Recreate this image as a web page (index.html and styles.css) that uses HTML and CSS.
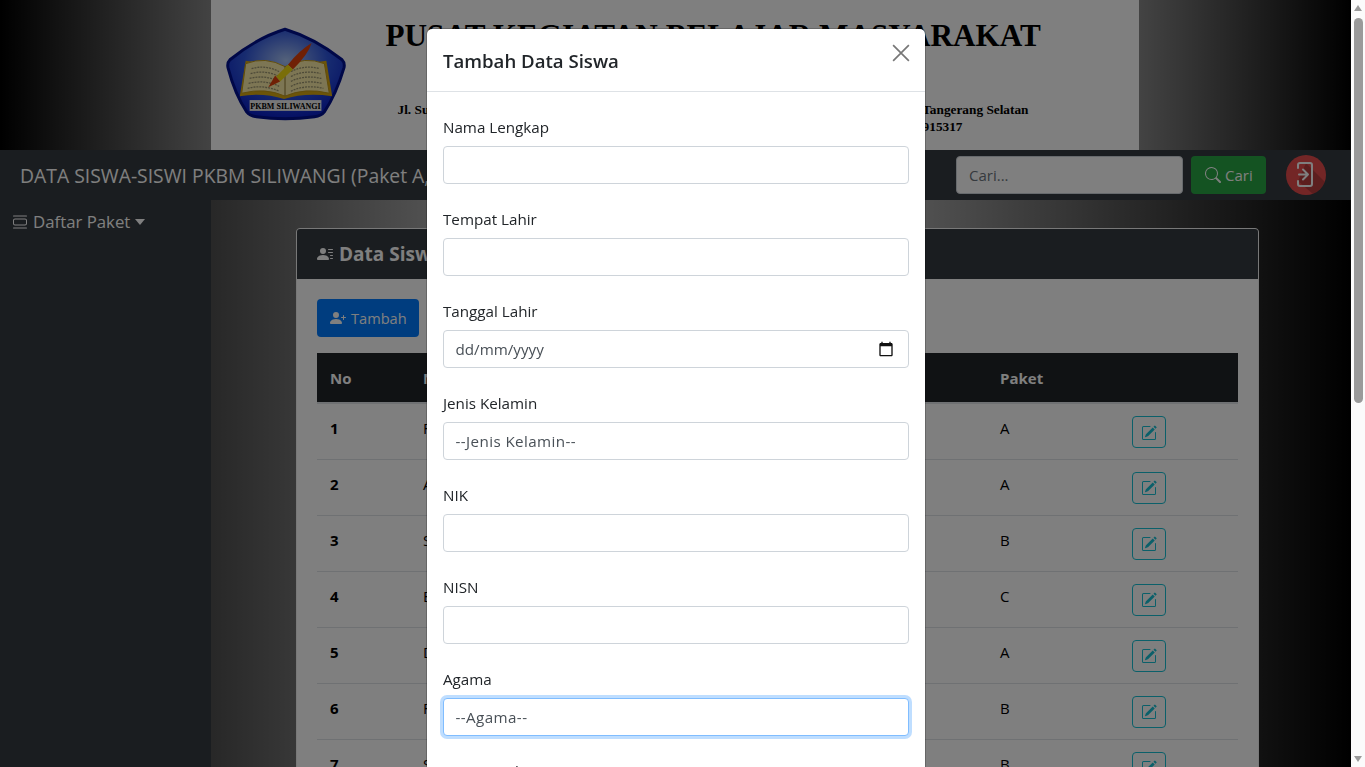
FILE: index.html
```html
<!DOCTYPE html>
<html lang="en">
<head>
    <meta charset="UTF-8">
    <meta name="viewport" content="width=device-width, initial-scale=1.0">
    <title>Data Siswa PKBM Siliwangi</title>
    <link rel="stylesheet" href="styles.css">
</head>
<body>
    <div class="page">
        <header class="top">
            <div class="banner">
                <svg class="logo" viewBox="0 0 122 96" width="120" height="95">
                    <defs>
                        <radialGradient id="shieldFill" cx="50%" cy="35%" r="65%">
                            <stop offset="0" stop-color="#a9c4f5"/>
                            <stop offset="0.55" stop-color="#2f57e0"/>
                            <stop offset="1" stop-color="#0a20c8"/>
                        </radialGradient>
                    </defs>
                    <path d="M60 2 Q90 11 118 33 Q121 36 120 41 Q112 68 100 86 Q97 90 90 91 Q60 95 31 91 Q24 90 21 86 Q9 68 2 41 Q1 36 4 33 Q31 11 60 2 Z" fill="url(#shieldFill)" stroke="#001090" stroke-width="3"/>
                    <path d="M14 70 L20 34 L59 40 L102 34 L108 70 Q80 66 59 73 Q38 66 14 70 Z" fill="#d9a810"/>
                    <path d="M20 37 Q40 29 60 40 Q80 29 100 37 L105 67 Q80 61 60 70 Q40 61 16 67 Z" fill="#fbeca8" stroke="#c29a18"/>
                    <path d="M60 40 V70" stroke="#8a7430" fill="none"/>
                    <g class="book-lines">
                        <path d="M26 42 Q40 38 54 45"/>
                        <path d="M25 47 Q40 43 54 50"/>
                        <path d="M24 52 Q40 48 54 55"/>
                        <path d="M23 57 Q40 53 54 60"/>
                        <path d="M22 62 Q38 58 54 65"/>
                        <path d="M66 45 Q80 38 95 42"/>
                        <path d="M66 50 Q80 43 96 47"/>
                        <path d="M66 55 Q80 48 97 52"/>
                        <path d="M66 60 Q80 53 98 57"/>
                        <path d="M66 65 Q80 58 99 62"/>
                    </g>
                    <path d="M87 16 Q84 27 68 43 L63 38 Q74 24 87 16 Z" fill="#e0400a"/>
                    <path d="M68 43 L55 55 L51 50 L63 38 Z" fill="#f4dc10"/>
                    <path d="M55 55 L43 61 L50 49 Z" fill="#e0400a"/>
                    <rect x="24" y="74" width="73" height="11" fill="#eeeeee"/>
                    <text class="logo-text" x="60.5" y="83" text-anchor="middle">PKBM SILIWANGI</text>
                </svg>
                <div class="banner-text">
                    <h1>PUSAT KEGIATAN BELAJAR MASYARAKAT</h1>
                    <p class="address"><span>Jl. Su</span><span>Tangerang Selatan</span></p>
                    <p class="phone">915317</p>
                </div>
            </div>
        </header>

        <nav class="navbar">
            <span class="brand">DATA SISWA-SISWI PKBM SILIWANGI (Paket A, B, C)</span>
            <form class="search">
                <input type="text" placeholder="Cari...">
                <button type="button" class="btn btn-green">
                    <svg class="icon" viewBox="0 0 16 16"><path d="M11.742 10.344a6.5 6.5 0 1 0-1.397 1.398h-.001c.03.04.062.078.098.115l3.85 3.85a1 1 0 0 0 1.415-1.414l-3.85-3.85a1.007 1.007 0 0 0-.115-.1zM12 6.5a5.5 5.5 0 1 1-11 0 5.5 5.5 0 0 1 11 0z"/></svg>
                    Cari
                </button>
            </form>
            <a class="logout" href="#">
                <svg viewBox="0 0 40 40" width="40" height="40">
                    <path d="M20 8 L40 28 V40 H28 L12 26 Z" class="logout-shadow"/>
                    <path d="M12 13 V10 Q12 8 14 8 H24 Q26 8 26 10 V29 Q26 31 24 31 H14 Q12 31 12 29 V26" class="logout-line"/>
                    <path d="M13 19.500 H22 M17 14.500 L22 19.500 L17 24.500" class="logout-line"/>
                </svg>
            </a>
        </nav>

        <div class="content">
            <aside class="sidebar">
                <a class="side-link" href="#">
                    <svg class="icon" viewBox="0 0 16 16"><path d="M3 4.500h10a2 2 0 0 1 2 2v3a2 2 0 0 1-2 2H3a2 2 0 0 1-2-2v-3a2 2 0 0 1 2-2zm0 1a1 1 0 0 0-1 1v3a1 1 0 0 0 1 1h10a1 1 0 0 0 1-1v-3a1 1 0 0 0-1-1H3zM1 2a.500.500 0 0 1 .500-.500h13a.500.500 0 0 1 0 1h-13A.500.500 0 0 1 1 2zm0 12a.500.500 0 0 1 .500-.500h13a.500.500 0 0 1 0 1h-13A.500.500 0 0 1 1 14z"/></svg>
                    Daftar Paket
                    <span class="caret"></span>
                </a>
            </aside>

            <main class="main">
                <section class="card">
                    <div class="card-header">
                        <svg class="icon" viewBox="0 0 16 16"><path d="M6 8a3 3 0 1 0 0-6 3 3 0 0 0 0 6zm-5 6s-1 0-1-1 1-4 6-4 6 3 6 4-1 1-1 1H1zM11 3.500a.500.500 0 0 1 .500-.500h4a.500.500 0 0 1 0 1h-4a.500.500 0 0 1-.500-.500zm.500 2.500a.500.500 0 0 0 0 1h4a.500.500 0 0 0 0-1h-4zm2 3a.500.500 0 0 0 0 1h2a.500.500 0 0 0 0-1h-2zm0 3a.500.500 0 0 0 0 1h2a.500.500 0 0 0 0-1h-2z"/></svg>
                        Data Siswa
                    </div>
                    <div class="card-body">
                        <button type="button" class="btn btn-blue">
                            <svg class="icon" viewBox="0 0 16 16"><path d="M1 14s-1 0-1-1 1-4 6-4 6 3 6 4-1 1-1 1H1zm5-6a3 3 0 1 0 0-6 3 3 0 0 0 0 6z"/><path d="M13.500 5a.500.500 0 0 1 .500.500V7h1.500a.500.500 0 0 1 0 1H14v1.500a.500.500 0 0 1-1 0V8h-1.500a.500.500 0 0 1 0-1H13V5.500a.500.500 0 0 1 .500-.500z"/></svg>
                            Tambah
                        </button>
                        <table class="table">
                            <colgroup>
                                <col class="col-no"><col class="col-name"><col class="col-paket"><col class="col-aksi">
                            </colgroup>
                            <thead>
                                <tr><th>No</th><th>N</th><th>Paket</th><th></th></tr>
                            </thead>
                            <tbody id="rows"></tbody>
                        </table>
                    </div>
                </section>
            </main>
        </div>
    </div>

    <div class="backdrop"></div>

    <div class="modal">
        <div class="modal-box">
            <div class="modal-header">
                <h5>Tambah Data Siswa</h5>
                <svg class="close" viewBox="0 0 16 16" width="18" height="18"><path d="M1 1 L15 15 M15 1 L1 15"/></svg>
            </div>
            <div class="modal-body">
                <div class="field">
                    <label>Nama Lengkap</label>
                    <input type="text">
                </div>
                <div class="field">
                    <label>Tempat Lahir</label>
                    <input type="text">
                </div>
                <div class="field">
                    <label>Tanggal Lahir</label>
                    <div class="date-wrap">
                        <input type="text" value="dd/mm/yyyy">
                        <svg class="calendar" viewBox="0 0 24 24" width="16" height="16"><path d="M20 3h-1V1h-2v2H7V1H5v2H4c-1.100 0-2 .9-2 2v16c0 1.100.9 2 2 2h16c1.100 0 2-.9 2-2V5c0-1.100-.9-2-2-2zm0 18H4V8h16v13z"/></svg>
                    </div>
                </div>
                <div class="field">
                    <label>Jenis Kelamin</label>
                    <select><option>--Jenis Kelamin--</option></select>
                </div>
                <div class="field">
                    <label>NIK</label>
                    <input type="text">
                </div>
                <div class="field">
                    <label>NISN</label>
                    <input type="text">
                </div>
                <div class="field">
                    <label>Agama</label>
                    <select class="focused"><option>--Agama--</option></select>
                </div>
                <div class="field">
                    <label>Nama Ayah</label>
                    <input type="text">
                </div>
            </div>
        </div>
    </div>

    <div class="scrollbar">
        <span class="arrow-up"></span>
        <div class="thumb"></div>
        <span class="arrow-down"></span>
    </div>

    <script src="script.js"></script>
</body>
</html>
```

FILE: styles.css
```css
* {
    box-sizing: border-box;
}
body {
    margin: 0;
    height: 100vh;
    overflow: hidden;
    font-family: 'Open Sans', 'Noto Sans', sans-serif;
    font-size: 15.2px;
    color: #212529;
    background: #fff;
}
.page {
    width: 1351px;
    height: 100vh;
    background: linear-gradient(to right, #000, #fff, #000);
}
.icon {
    width: 16px;
    height: 16px;
    fill: currentColor;
    flex: none;
}

/* banner */
.top {
    height: 150px;
    display: flex;
    justify-content: center;
    padding-right: 2px;
    background: linear-gradient(to right, #000, #fff 400px, #fff calc(100% - 400px), #000);
}
.banner {
    width: 928px;
    background: #fff;
    display: flex;
    padding: 27px 0 0 15px;
}
.logo {
    flex: none;
}
.book-lines path {
    fill: none;
    stroke: #9a9470;
    stroke-width: 1.3;
    stroke-dasharray: 2 1;
}
.logo-text {
    font-family: 'Liberation Serif', serif;
    font-weight: bold;
    font-size: 8.2px;
    fill: #000;
}
.banner-text {
    margin-left: 40px;
    font-family: 'Liberation Serif', serif;
    font-weight: bold;
    color: #000;
}
.banner-text h1 {
    margin: -11px 0 0;
    font-size: 31.2px;
    line-height: 40px;
    white-space: nowrap;
}
.address {
    margin: 45px 0 0 12px;
    width: 631px;
    display: flex;
    justify-content: space-between;
    font-size: 13.3px;
    line-height: 17px;
}
.phone {
    margin: 0 0 0 12px;
    width: 565px;
    text-align: right;
    font-size: 13.3px;
    line-height: 17px;
}

/* navbar */
.navbar {
    height: 50px;
    background: #343a40;
    display: flex;
    align-items: center;
    padding: 0 25px 0 20px;
    color: #fff;
}
.brand {
    font-size: 19.35px;
    padding-top: 1px;
    white-space: nowrap;
}
.search {
    margin-left: auto;
    display: flex;
    gap: 8px;
}
.search input {
    width: 227px;
    height: 38px;
    padding: 6px 12px;
    border: 1px solid #ced4da;
    border-radius: 4px;
    font: inherit;
    font-size: 15px;
}
.search input::placeholder {
    color: #6c757d;
}
.btn {
    height: 38px;
    display: inline-flex;
    align-items: center;
    gap: 5px;
    padding: 0 12px;
    border: 1px solid transparent;
    border-radius: 4px;
    font: inherit;
    font-size: 15px;
    color: #fff;
}
.btn-green {
    width: 75px;
    padding: 0 13px;
    gap: 4px;
    background: #28a745;
}
.btn-blue {
    width: 102px;
    font-size: 14.6px;
    background: #007bff;
}
.logout {
    margin-left: 20px;
    width: 40px;
    height: 40px;
    border-radius: 50%;
    overflow: hidden;
    background: #e74c4c;
}
.logout svg {
    display: block;
}
.logout-shadow {
    fill: rgba(0, 0, 0, 0.2);
}
.logout-line {
    fill: none;
    stroke: #fff;
    stroke-width: 2;
    stroke-linecap: round;
    stroke-linejoin: round;
}

/* content */
.content {
    display: flex;
    height: 567px;
    overflow: hidden;
}
.sidebar {
    width: 211px;
    flex: none;
    background: #343a40;
    padding: 10px 12px;
}
.side-link {
    display: flex;
    align-items: center;
    gap: 5px;
    color: #fff;
    text-decoration: none;
    font-size: 16.8px;
    line-height: 24px;
}
.caret {
    width: 0;
    height: 0;
    border-left: 5.5px solid transparent;
    border-right: 5.5px solid transparent;
    border-top: 6px solid #fff;
}
.main {
    flex: 1;
    padding: 28px 92px 0 85px;
}
.card {
    background: #fff;
    border: 1px solid #f0f0f0;
    border-radius: 4px;
    height: 700px;
}
.card-header {
    height: 50px;
    background: #343a40;
    color: #fff;
    display: flex;
    align-items: center;
    gap: 6px;
    padding: 0 20px;
    font-size: 19px;
    font-weight: 700;
    border-radius: 3px 3px 0 0;
}
.card-body {
    padding: 20px;
}
.table {
    width: 921px;
    margin-top: 16px;
    border-collapse: collapse;
    table-layout: fixed;
    font-size: 15px;
}
.col-no {
    width: 93px;
}
.col-name {
    width: 577px;
}
.col-paket {
    width: 132px;
}
.col-aksi {
    width: 119px;
}
.table th {
    height: 50px;
    padding: 0 13px;
    background: #212529;
    color: #fff;
    text-align: left;
    font-weight: 700;
    border-bottom: 2px solid #dee2e6;
}
.table td {
    height: 56px;
    padding: 12px 13px 0;
    vertical-align: top;
    line-height: 24px;
    border-bottom: 1px solid #dee2e6;
    color: #000;
}
.table td:first-child {
    font-weight: 700;
}
.edit {
    width: 34px;
    height: 32px;
    display: flex;
    align-items: center;
    justify-content: center;
    border: 1px solid #17c0d4;
    border-radius: 4px;
    color: #17c0d4;
}
.edit .icon {
    margin-top: 1px;
}

/* modal */
.backdrop {
    position: fixed;
    left: 0;
    top: 0;
    bottom: 0;
    width: 1351px;
    background: rgba(0, 0, 0, 0.5);
}
.modal {
    position: fixed;
    left: 0;
    top: 0;
    width: 1351px;
    height: 100vh;
    overflow: hidden;
}
.modal-box {
    width: 500px;
    margin: 28px 0 0 426px;
    background: #fff;
    background-clip: padding-box;
    border: 1px solid rgba(0, 0, 0, 0.2);
    border-radius: 6px;
}
.modal-header {
    height: 63px;
    display: flex;
    align-items: flex-start;
    justify-content: space-between;
    padding: 0 15px 0 16px;
    border-bottom: 1px solid #dee2e6;
}
.modal-header h5 {
    margin: 0;
    font-size: 18.6px;
    font-weight: 600;
    line-height: 64px;
}
.close {
    margin-top: 15px;
}
.close path {
    fill: none;
    stroke: #777;
    stroke-width: 1.5;
}
.modal-body {
    padding: 23px 16px 0;
}
.field {
    margin-bottom: 23px;
}
.field label {
    display: block;
    line-height: 24px;
    margin-bottom: 7px;
}
.field input,
.field select {
    display: block;
    width: 466px;
    height: 38px;
    padding: 6px 12px 6px 11.5px;
    border: 1px solid #ced4da;
    border-radius: 4px;
    font: inherit;
    color: #495057;
    background: #fff;
    appearance: none;
    outline: none;
}
.field select {
    letter-spacing: 0.4px;
}
.field .focused {
    border-color: #80bdff;
    box-shadow: 0 0 0 3px rgba(0, 123, 255, 0.25);
}
.date-wrap {
    position: relative;
    width: 466px;
}
.calendar {
    position: absolute;
    right: 15px;
    top: 11px;
    fill: #111;
}

/* window scrollbar */
.scrollbar {
    position: fixed;
    top: 0;
    right: 0;
    bottom: 0;
    width: 14px;
    background: #fbfbfb;
}
.thumb {
    position: absolute;
    left: 3px;
    top: 18px;
    width: 9px;
    height: 385px;
    border-radius: 5px;
    background: #9a9a9a;
}
.arrow-up,
.arrow-down {
    position: absolute;
    left: 3px;
    width: 0;
    height: 0;
    border-left: 4.5px solid transparent;
    border-right: 4.5px solid transparent;
}
.arrow-up {
    top: 5px;
    border-bottom: 6px solid #9a9a9a;
}
.arrow-down {
    bottom: 5px;
    border-top: 6px solid #9a9a9a;
}
```

FILE: script.js
```js
var rows = [
    ['1', 'F', 'A'],
    ['2', 'A', 'A'],
    ['3', 'S', 'B'],
    ['4', 'E', 'C'],
    ['5', 'D', 'A'],
    ['6', 'F', 'B'],
    ['7', 'S', 'B']
];
var editIcon = '<svg class="icon" viewBox="0 0 16 16">' +
    '<path d="M15.502 1.94a.5.5 0 0 1 0 .706L14.459 3.69l-2-2L13.502.646a.5.5 0 0 1 .707 0l1.293 1.293zm-1.75 2.456-2-2L4.939 9.21a.5.5 0 0 0-.121.196l-.805 2.414a.25.25 0 0 0 .316.316l2.414-.805a.5.5 0 0 0 .196-.12l6.813-6.814z"/>' +
    '<path d="M1 13.5A1.5 1.5 0 0 0 2.5 15h11a1.5 1.5 0 0 0 1.5-1.5v-6a.5.5 0 0 0-1 0v6a.5.5 0 0 1-.5.5h-11a.5.5 0 0 1-.5-.5v-11a.5.5 0 0 1 .5-.5H9a.5.5 0 0 0 0-1H2.5A1.5 1.5 0 0 0 1 2.5v11z"/>' +
    '</svg>';
var html = '';
rows.forEach(function (r) {
    html += '<tr><td>' + r[0] + '</td><td>' + r[1] + '</td><td>' + r[2] + '</td><td><a class="edit">' + editIcon + '</a></td></tr>';
});
document.getElementById('rows').innerHTML = html;
```
